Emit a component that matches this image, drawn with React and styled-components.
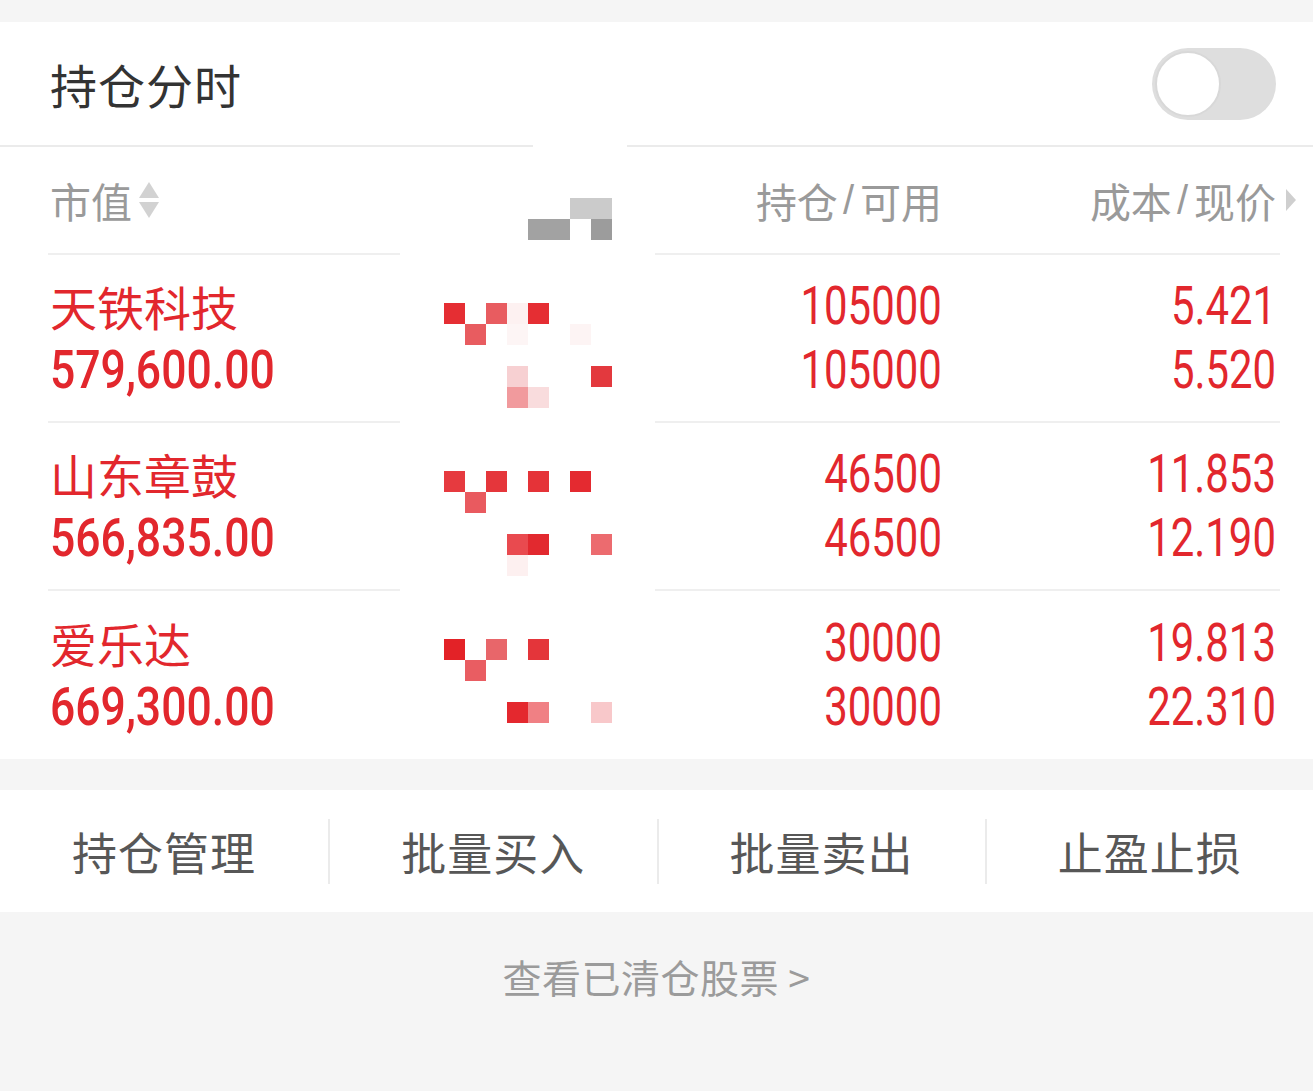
import React from 'react';
import styled, {createGlobalStyle} from 'styled-components';

const RED = '#e2272d';

const GlobalStyle = createGlobalStyle`
    html, body {
        margin: 0;
        padding: 0;
        background: #f5f5f5;
        font-family: "Noto Sans CJK SC", "Noto Sans", sans-serif;
    }
    * { box-sizing: border-box; }
`;

const Page = styled.div`
    width: 100%;
    padding-top: 22px;
    background: #f5f5f5;
`;

const Header = styled.div`
    height: 123px;
    background: #fff;
    display: flex;
    align-items: center;
    justify-content: space-between;
    padding: 0 37px 0 50px;
`;

const Title = styled.div`
    font-size: 47px;
    color: #333;
    letter-spacing: 1px;
`;

const Toggle = styled.div`
    width: 124px;
    height: 72px;
    border-radius: 36px;
    background: #dedede;
    display: flex;
    align-items: center;
    padding-left: 3px;
`;

const Knob = styled.div`
    width: 66px;
    height: 66px;
    border-radius: 50%;
    background: #fff;
    border: 2px solid #d8d8d8;
`;

const Divider = styled.div`
    display: flex;
    gap: 94px;
    background: #fff;
`;

const DividerPart = styled.div`
    height: 2px;
    background: #ebebeb;
    width: ${p => p.$w ? p.$w + 'px' : 'auto'};
    flex: ${p => p.$w ? 'none' : 1};
`;

const Table = styled.div`
    background: #fff;
    display: grid;
    grid-template-columns: 352px 255px 287px 1fr;
    grid-template-rows: 108px repeat(3, 168px);
    padding: 0 33px 0 48px;
`;

const Cell = styled.div`
    border-bottom: ${p => p.$line ? '2px solid #efefef' : 'none'};
    display: flex;
    flex-direction: column;
    justify-content: center;
    align-items: ${p => p.$right ? 'flex-end' : 'flex-start'};
    padding-left: ${p => p.$right ? 0 : 2}px;
    padding-right: ${p => p.$pr || 0}px;
`;

const MaskCell = styled.div`
    padding: ${p => p.$top}px 0 0 44px;
`;

const HeadText = styled.div`
    font-size: 41px;
    color: #9a9a9a;
    display: flex;
    align-items: center;
    line-height: 1;
`;

const Slash = styled.span`
    font-family: "Liberation Sans", sans-serif;
    font-size: 40px;
    margin: 0 6px 0 5px;
    color: #9a9a9a;
`;

const SortIcon = styled.svg`
    margin-left: 6px;
`;

const ArrowIcon = styled.svg`
    margin-left: 10px;
    margin-right: -20px;
`;

const Name = styled.div`
    font-size: 47px;
    line-height: 64px;
    color: ${RED};
`;

// condensed DIN-like figures: Roboto squeezed horizontally
const Num = styled.div`
    font-family: Roboto, "Liberation Sans", sans-serif;
    font-size: 53px;
    line-height: 64px;
    color: ${RED};
    font-weight: ${p => p.$bold ? 500 : 400};
    transform: scaleX(${p => p.$bold ? 0.84 : 0.79});
    transform-origin: ${p => p.$bold ? 'left' : 'right'} center;
`;

const Gap = styled.div`
    height: 31px;
`;

const ActionBar = styled.div`
    height: 122px;
    background: #fff;
    display: grid;
    grid-template-columns: repeat(4, 1fr);
    align-items: center;
`;

const Action = styled.div`
    height: 65px;
    display: flex;
    align-items: center;
    justify-content: center;
    font-size: 45px;
    color: #575757;
    border-left: ${p => p.$first ? 'none' : '2px solid #ebebeb'};
    letter-spacing: 1px;
`;

const Footer = styled.div`
    height: 179px;
    display: flex;
    justify-content: center;
    padding-top: 40px;
    font-size: 39px;
    line-height: 48px;
    color: #9b9b9b;
    letter-spacing: 0.5px;
`;

const C = 21;

const Mosaic = ({cells}) => (
    <svg width={C * 8} height={C * 5}>
        {cells.map(([x, y, fill], i) => (
            <rect key={i} x={x * C} y={y * C} width={C} height={C} fill={fill} />
        ))}
    </svg>
);

const headCells = [
    [6, 0, '#cbcbcb'], [7, 0, '#cbcbcb'],
    [4, 1, '#a2a2a2'], [5, 1, '#a2a2a2'], [7, 1, '#9c9c9c'],
];

const stocks = [
    {
        name: '天铁科技', value: '579,600.00', hold: '105000', avail: '105000', cost: '5.421', price: '5.520',
        cells: [
            [0, 0, '#e52e33'], [2, 0, '#e85c60'], [3, 0, '#fdf1f1'], [4, 0, '#e52e33'],
            [1, 1, '#e85c60'], [3, 1, '#fdf5f5'], [6, 1, '#fdf4f4'],
            [3, 3, '#f7d0d2'], [7, 3, '#e3393e'],
            [3, 4, '#f19a9d'], [4, 4, '#f9dcdd'],
        ],
    },
    {
        name: '山东章鼓', value: '566,835.00', hold: '46500', avail: '46500', cost: '11.853', price: '12.190',
        cells: [
            [0, 0, '#e63a3f'], [2, 0, '#e5363b'], [4, 0, '#e53338'], [6, 0, '#e42a30'],
            [1, 1, '#e95a5f'],
            [3, 3, '#e94a4f'], [4, 3, '#e2292f'], [7, 3, '#ec6b6f'],
            [3, 4, '#fdf0f0'],
        ],
    },
    {
        name: '爱乐达', value: '669,300.00', hold: '30000', avail: '30000', cost: '19.813', price: '22.310',
        cells: [
            [0, 0, '#e32227'], [2, 0, '#e8666a'], [4, 0, '#e4353a'],
            [1, 1, '#e95d62'],
            [3, 3, '#e4282e'], [4, 3, '#f08084'], [7, 3, '#f8c8ca'],
        ],
    },
];

const actions = ['持仓管理', '批量买入', '批量卖出', '止盈止损'];

export default () => {
    return (
        <>
            <GlobalStyle />
            <Page>
                <Header>
                    <Title>持仓分时</Title>
                    <Toggle><Knob /></Toggle>
                </Header>
                <Divider>
                    <DividerPart $w={533} />
                    <DividerPart />
                </Divider>
                <Table>
                    <Cell $line>
                        <HeadText>
                            市值
                            <SortIcon width="22" height="40" viewBox="0 0 22 40">
                                <polygon points="11,2 21,18 1,18" fill="#d2d2d2" />
                                <polygon points="1,22 21,22 11,38" fill="#d2d2d2" />
                            </SortIcon>
                        </HeadText>
                    </Cell>
                    <MaskCell $top={51}><Mosaic cells={headCells} /></MaskCell>
                    <Cell $line $right>
                        <HeadText>持仓<Slash>/</Slash>可用</HeadText>
                    </Cell>
                    <Cell $line $right $pr={4}>
                        <HeadText>
                            成本<Slash>/</Slash>现价
                            <ArrowIcon width="10" height="22" viewBox="0 0 10 22">
                                <polygon points="0,0 10,11 0,22" fill="#cfcfcf" />
                            </ArrowIcon>
                        </HeadText>
                    </Cell>
                    {stocks.map((s, i) => {
                        const line = i < stocks.length - 1;
                        return (
                            <React.Fragment key={s.name}>
                                <Cell $line={line}>
                                    <Name>{s.name}</Name>
                                    <Num $bold>{s.value}</Num>
                                </Cell>
                                <MaskCell $top={48}><Mosaic cells={s.cells} /></MaskCell>
                                <Cell $line={line} $right>
                                    <Num>{s.hold}</Num>
                                    <Num>{s.avail}</Num>
                                </Cell>
                                <Cell $line={line} $right $pr={4}>
                                    <Num>{s.cost}</Num>
                                    <Num>{s.price}</Num>
                                </Cell>
                            </React.Fragment>
                        );
                    })}
                </Table>
                <Gap />
                <ActionBar>
                    {actions.map((a, i) => <Action key={a} $first={i === 0}>{a}</Action>)}
                </ActionBar>
                <Footer>查看已清仓股票 &gt;</Footer>
            </Page>
        </>
    );
};
